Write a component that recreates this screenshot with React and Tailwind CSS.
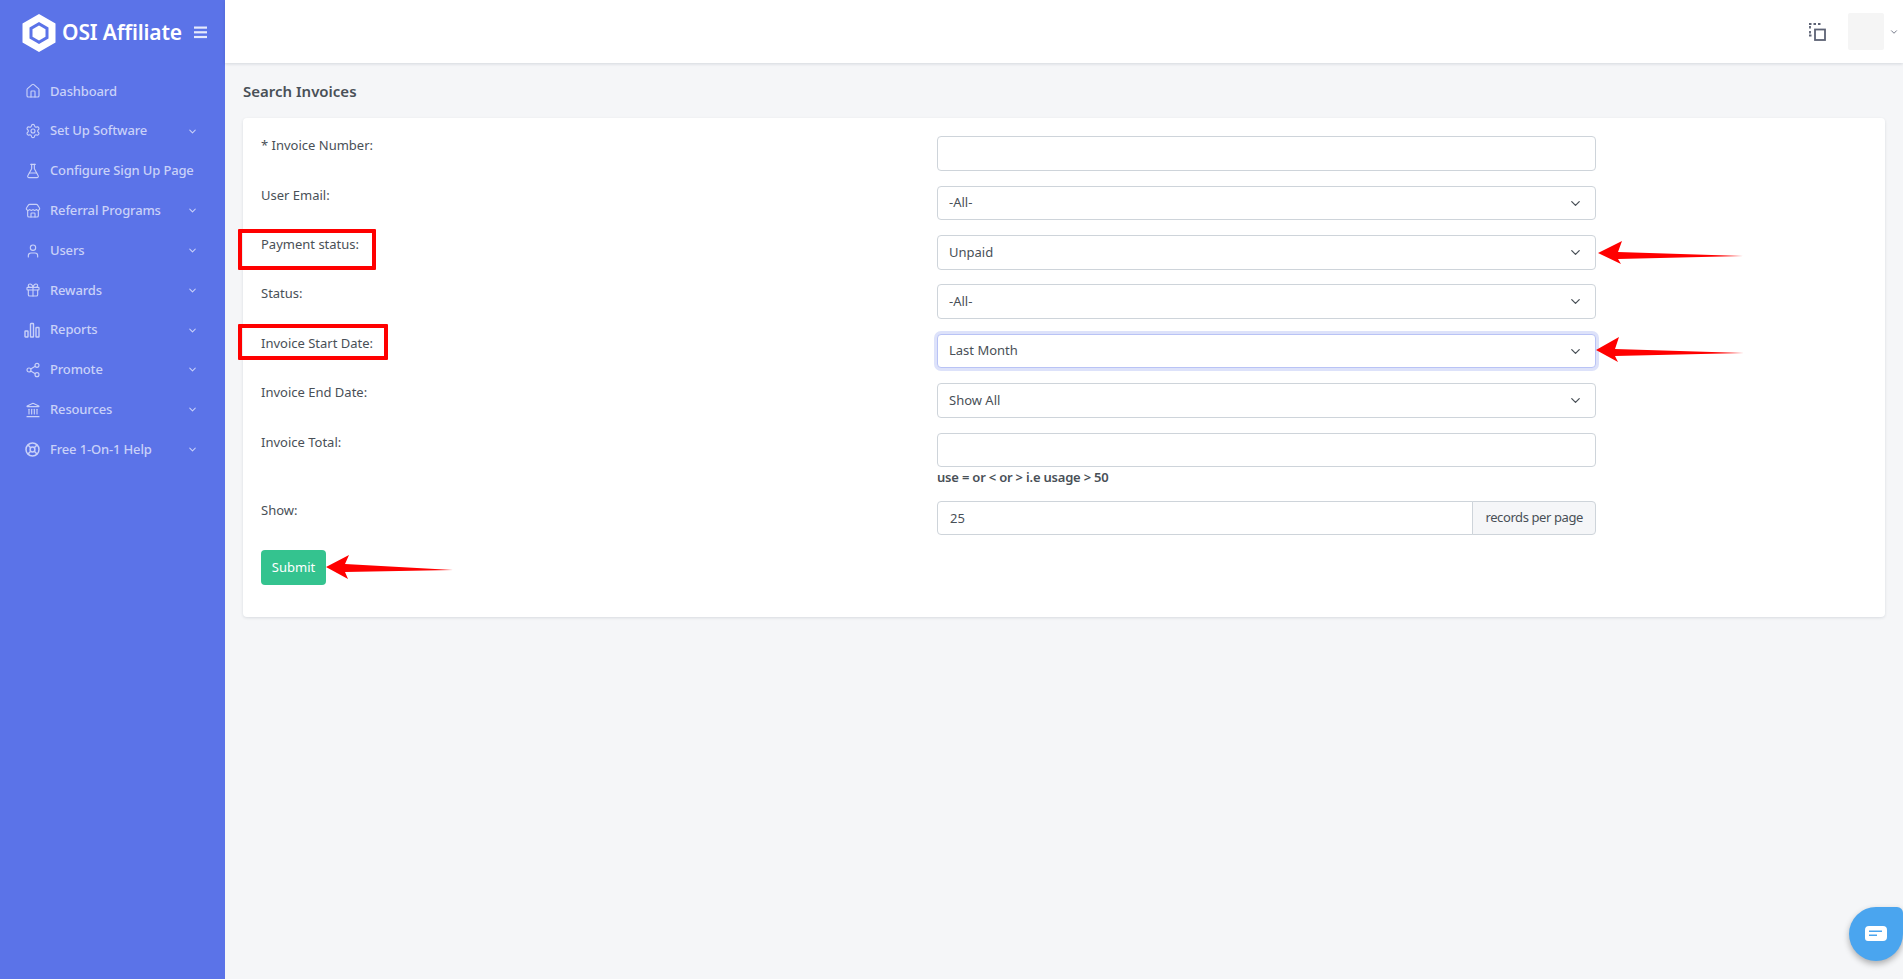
import React from "react";
import { Home, Settings, FlaskConical, Store, User, Gift, Share2, Landmark, ChevronDown } from "lucide-react";

const Bars = (p) => (
  <svg width="16" height="16" viewBox="0 0 16 16" fill="none" stroke="currentColor" strokeWidth="1.4" className="-ml-[1px]">
    <rect x="1" y="9" width="3" height="6" rx="0.5" />
    <rect x="6.5" y="1.5" width="3" height="13.5" rx="0.5" />
    <rect x="12" y="5.5" width="3" height="9.5" rx="0.5" />
  </svg>
);
const LifeRing = (p) => (
  <svg width="15" height="15" viewBox="0 0 15 15" fill="none" stroke="currentColor" strokeWidth="1.5">
    <circle cx="7.5" cy="7.5" r="6.5" />
    <circle cx="7.5" cy="7.5" r="2.4" />
    <path d="M3 3l2.7 2.7M12 3L9.3 5.7M3 12l2.7-2.7M12 12L9.3 9.3" />
  </svg>
);

const nav = [
  ["Dashboard", Home, false],
  ["Set Up Software", Settings, true],
  ["Configure Sign Up Page", FlaskConical, false],
  ["Referral Programs", Store, true],
  ["Users", User, true],
  ["Rewards", Gift, true],
  ["Reports", Bars, true],
  ["Promote", Share2, true],
  ["Resources", Landmark, true],
  ["Free 1-On-1 Help", LifeRing, true],
];

const Chevron = () => (
  <ChevronDown size={15} strokeWidth={2} className="absolute right-[13px] top-[10px] text-[#495057] pointer-events-none" />
);

const fieldClass = "w-full h-[34.5px] px-3 bg-white border border-[#ced4da] rounded-[4px] text-[13px] text-[#495057] outline-none";
const selectClass = "w-full h-[34.5px] pl-[11px] pr-3 bg-white border rounded-[4px] text-[13px] text-[#495057] outline-none appearance-none";

function Row({ label, children, help }) {
  return (
    <div className="flex mb-[14.88px]">
      <label className="w-[676px] shrink-0 leading-[19.5px] text-[13px] text-[#495057]">{label}</label>
      <div className="w-[659px]">
        {children}
        {help && <div className="mt-[0.5px] -mb-[1px] text-[13px] leading-[19.5px] font-semibold tracking-[-0.2px] text-[#495057]">{help}</div>}
      </div>
    </div>
  );
}

function Sel({ value, focus }) {
  return (
    <div className="relative">
      <select
        defaultValue={value}
        className={selectClass + (focus ? " border-[#b9c3f5] ring-[3px] ring-[#dde2fa]" : " border-[#ced4da]")}
      >
        <option>{value}</option>
      </select>
      <Chevron />
    </div>
  );
}

const Arrow = ({ className, w, h, d }) => (
  <svg className={"absolute " + className} width={w} height={h} viewBox={`0 0 ${w} ${h}`}>
    <path d={d} fill="#ff0000" />
  </svg>
);

export default function App() {
  return (
    <div className="relative flex h-screen w-full overflow-hidden bg-[#f5f6f8] font-['Noto_Sans','Liberation_Sans',sans-serif]">
      <aside className="w-[225px] shrink-0 bg-[#5b73e8] text-[#c9d1f8]">
        <div className="h-[63px] flex items-center pt-[3px] pl-[22px] pr-[17px]">
          <svg width="34" height="38" viewBox="0 0 34 38" className="shrink-0">
            <path fillRule="evenodd" fill="#fff" d="M17 0L33.5 9.5V28.5L17 38L.5 28.5V9.5ZM17 8L7.5 13.5V24.5L17 30L26.5 24.5V13.5Z" />
            <path fill="#fff" d="M17 11.5L23.5 15.2V22.8L17 26.5L10.5 22.8V15.2Z" />
          </svg>
          <span className="ml-[6px] text-[21px] font-semibold text-white whitespace-nowrap tracking-[-0.15px]">OSI Affiliate</span>
          <svg width="14" height="13" viewBox="0 0 14 13" className="ml-auto -mt-[2px] shrink-0" fill="#e6eafc">
            <rect x="0" y="0.5" width="13" height="2.2" />
            <rect x="0" y="5.2" width="13" height="2.2" />
            <rect x="0" y="9.9" width="13" height="2.2" />
          </svg>
        </div>
        <nav className="pt-[8.5px]">
          {nav.map(([label, Icon, more]) => (
            <div key={label} className="h-[39.8px] flex items-center pl-[25px] pr-[27px] text-[13px] font-medium tracking-[-0.15px]">
              <span className="w-[25px] shrink-0"><Icon size={16} strokeWidth={1.7} /></span>
              <span className="whitespace-nowrap">{label}</span>
              {more && <ChevronDown size={11} strokeWidth={2.2} className="ml-auto" />}
            </div>
          ))}
        </nav>
      </aside>

      <div className="flex-1 min-w-0 flex flex-col">
        <header className="h-[63px] shrink-0 bg-white shadow-[0_1px_3px_rgba(15,34,58,0.14)] flex items-center justify-end">
          <svg width="17" height="18" viewBox="0 0 17 18" fill="none" stroke="#5c6274" className="mr-[22px]">
            <rect x="6" y="6.5" width="10" height="10.5" strokeWidth="1.8" />
            <path d="M0 1h2.5M4.5 1h2.5M9 1h2.5M1 3v2.5M1 8v2.5M0 12.5h2.5" strokeWidth="1.8" />
          </svg>
          <div className="w-[36px] h-[37px] bg-[#f5f5f5] rounded-[2px]" />
          <ChevronDown size={10} strokeWidth={2} className="ml-[5px] mr-[4px] text-[#5c6274]" />
        </header>

        <main className="px-[18px] pt-[19px]">
          <h1 className="text-[15px] leading-[18px] font-semibold text-[#495057] mb-[18px]">Search Invoices</h1>
          <section className="bg-white rounded-[4px] shadow-[0_1px_3px_rgba(15,34,58,0.12)] px-[18px] pt-[18.3px] pb-[32px]">
            <Row label="* Invoice Number:"><input className={fieldClass} /></Row>
            <Row label="User Email:"><Sel value="-All-" /></Row>
            <Row label="Payment status:"><Sel value="Unpaid" /></Row>
            <Row label="Status:"><Sel value="-All-" /></Row>
            <Row label="Invoice Start Date:"><Sel value="Last Month" focus /></Row>
            <Row label="Invoice End Date:"><Sel value="Show All" /></Row>
            <Row label="Invoice Total:" help="use = or < or > i.e usage > 50"><input className={fieldClass} /></Row>
            <Row label="Show:">
              <div className="flex h-[34.5px]">
                <input defaultValue="25" className="flex-1 min-w-0 h-full px-3 bg-white border border-[#ced4da] rounded-l-[4px] text-[13px] text-[#495057] outline-none" />
                <span className="flex items-center px-3 -ml-px bg-[#f5f6f8] border border-[#ced4da] rounded-r-[4px] text-[13px] tracking-[-0.4px] text-[#495057] whitespace-nowrap">records per page</span>
              </div>
            </Row>
            <button className="block mt-[0.7px] w-[65px] h-[35px] bg-[#34c38f] rounded-[4px] text-[13px] text-white">Submit</button>
          </section>
        </main>
      </div>

      {/* annotations drawn on top of the screenshot */}
      <div className="absolute left-[238px] top-[229px] w-[138px] h-[41px] border-[4px] border-[#ff0000] rounded-[1px]" />
      <div className="absolute left-[238px] top-[324px] w-[150px] h-[36px] border-[4px] border-[#ff0000] rounded-[1px]" />
      <Arrow className="left-[1598px] top-[241px]" w={146} h={24} d="M0 12L24 0L20 11L145 15L20 18L23 23Z" />
      <Arrow className="left-[1596px] top-[337px]" w={149} h={26} d="M0 13L23 0L19 12L148 16L19 19L22 25Z" />
      <Arrow className="left-[326px] top-[555px]" w={128} h={25} d="M0 12L23 0L19 9L127 15L19 17L22 24Z" />

      <div className="absolute left-[1849px] top-[907px] w-[54px] h-[54px] bg-[#4aa5ef] rounded-[27px] rounded-tr-[6px] shadow-[0_3px_6px_rgba(0,0,0,0.3)] flex items-center justify-center">
        <svg width="22" height="16" viewBox="0 0 22 16">
          <path fill="#fff" fillRule="evenodd" d="M4 0H18A4 4 0 0 1 22 4V11A4 4 0 0 1 18 15H3A3 3 0 0 1 0 12V4A4 4 0 0 1 4 0ZM4 4.5V6H17V4.5ZM4 8.5V10H12V8.5Z" />
        </svg>
      </div>
    </div>
  );
}
